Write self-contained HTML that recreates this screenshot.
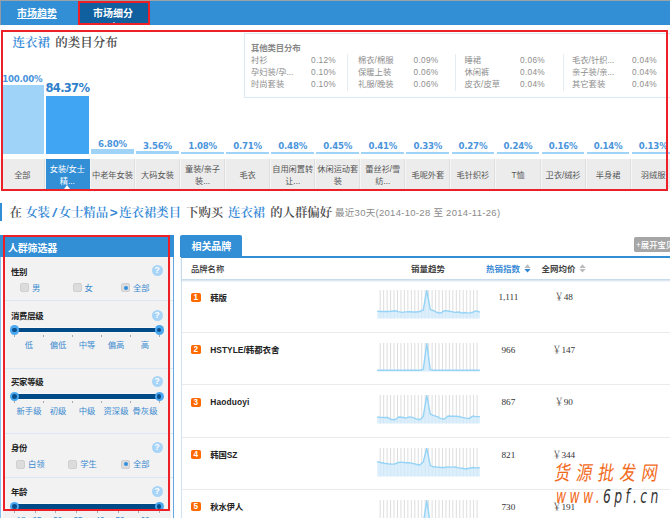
<!DOCTYPE html>
<html lang="zh-CN"><head><meta charset="utf-8"><title>市场细分</title>
<style>
*{box-sizing:border-box;margin:0;padding:0}
html,body{width:670px;height:518px;overflow:hidden;background:#fff}
body{position:relative;font-family:"Liberation Sans","Noto Sans CJK SC",sans-serif;font-size:8.3px;color:#555;line-height:1}
.a{position:absolute;white-space:nowrap}
.serif{font-family:"Liberation Serif","Noto Serif CJK SC",serif;font-weight:600}
.blue{color:#3388d6}
.b{font-weight:700}
.sy{display:inline-block;width:9.7px;text-align:center;font-size:13.5px;line-height:10px;font-style:italic;font-weight:700;font-family:"Liberation Sans",sans-serif}
.red{position:absolute;border:2px solid #ee2027;pointer-events:none}
.cell{position:absolute;top:158.8px;height:30.7px;width:45.06px;background:#ececec;border-right:0.8px solid #dfdfdf;border-left:0.8px solid #f6f6f6;text-align:center;color:#555;font-size:8.2px;line-height:12px;display:flex;align-items:center;justify-content:center;padding-top:3.4px}
.cell.on{background:#328fd6;color:#fff;border-right-color:#328fd6}
.bar{position:absolute;background:#9fd3f8}
.pl{position:absolute;text-align:center;width:45.06px;font-weight:700;color:#4a94dc;font-size:8.6px;font-family:"DejaVu Sans","Liberation Sans",sans-serif;letter-spacing:-0.2px}
.it{position:absolute;color:#8e8e8e;font-size:8.3px;line-height:12.2px;white-space:nowrap}
.sec{position:absolute;left:5px;width:168px;border-top:1px solid #dbe8f3}
.st{position:absolute;left:11px;font-weight:700;color:#222;font-size:8.4px;letter-spacing:-0.3px}
.q{position:absolute;left:151.5px;width:11px;height:11px;border-radius:50%;background:#a8d4f7;color:#fff;font-weight:700;font-size:8.5px;text-align:center;line-height:11px}
.cb{position:absolute;width:9px;height:9px;border-radius:2px;background:#dcdcdc;border:1px solid #cfcfcf}
.cb.on::after{content:"";position:absolute;left:1.5px;top:1.5px;width:4px;height:4px;border-radius:50%;background:#2f8fe0}
.ol{position:absolute;color:#3a8ad0;font-size:8.3px}
.trk{position:absolute;left:14.5px;width:145px;height:4.7px;background:#004a87;box-shadow:0 0 0 0.6px rgba(255,255,255,.8)}
.hd{position:absolute;width:9.4px;height:9.4px;border-radius:50%;background:#4aa8f0}
.hd::after{content:"";position:absolute;left:2.4px;top:2.4px;width:4.6px;height:4.6px;border-radius:50%;background:#0a4f8c}
.tk{position:absolute;width:1px;height:2.5px;background:#aaa}
.sl{position:absolute;color:#3a8ad0;font-size:8.3px;text-align:center;width:36px}
.row{position:absolute;left:181px;width:489px;border-top:1px solid #e6eef5}
.bd{position:absolute;left:191px;width:9.7px;height:9px;border-radius:1.8px;background:#ff6a00;color:#fff;font-weight:700;font-size:8.2px;line-height:9px;text-align:center;font-family:"Liberation Sans",sans-serif}
.nm{position:absolute;left:210.3px;font-weight:700;color:#222;font-size:8.4px;letter-spacing:-0.25px}
.num{position:absolute;color:#333;font-size:9.2px;text-align:center;width:60px;font-family:"Liberation Serif","Noto Serif CJK SC",serif}
</style></head><body>

<div class="a" style="left:0;top:0;width:670px;height:1px;background:#9aa3aa"></div>
<div class="a" style="left:0;top:1px;width:670px;height:24px;background:#328fd6"></div>
<div class="a" style="left:0;top:1px;width:1px;height:24px;background:#8f9aa3"></div>
<div class="a b" style="left:17px;top:8px;font-size:10px;color:#fff;text-decoration:underline;line-height:12px">市场趋势</div>
<div class="a" style="left:78px;top:1px;width:72px;height:24px;background:#10609f"></div>
<div class="a b" style="left:93px;top:8px;font-size:10px;color:#fff;line-height:12px">市场细分</div>
<div class="a" style="left:111px;top:22px;width:0;height:0;border-left:3px solid transparent;border-right:3px solid transparent;border-bottom:3px solid #fff"></div>
<div class="red" style="left:78px;top:1px;width:72px;height:24px"></div>
<div class="a" style="left:244px;top:32.5px;width:426px;height:1px;background:#cfe3f4"></div>
<div class="a serif" style="left:12.5px;top:35px;font-size:12.5px;line-height:16px;color:#4a4a4a;word-spacing:2px"><span class="blue">连衣裙</span> 的类目分布</div>
<div class="a" style="left:243.5px;top:33px;width:430px;height:64.5px;border:1px solid #dbe9f6;background:#fff"></div>
<div class="a b" style="left:251px;top:43px;font-size:8.4px;color:#888;line-height:10px;letter-spacing:-0.1px">其他类目分布</div>
<div class="it" style="left:251px;top:53.7px">衬衫</div>
<div class="it" style="left:311px;top:53.7px;letter-spacing:0.3px">0.12%</div>
<div class="it" style="left:251px;top:65.9px">孕妇装/孕...</div>
<div class="it" style="left:311px;top:65.9px;letter-spacing:0.3px">0.10%</div>
<div class="it" style="left:251px;top:78.1px">时尚套装</div>
<div class="it" style="left:311px;top:78.1px;letter-spacing:0.3px">0.10%</div>
<div class="it" style="left:358px;top:53.7px">棉衣/棉服</div>
<div class="it" style="left:413.5px;top:53.7px;letter-spacing:0.3px">0.09%</div>
<div class="it" style="left:358px;top:65.9px">保暖上装</div>
<div class="it" style="left:413.5px;top:65.9px;letter-spacing:0.3px">0.06%</div>
<div class="it" style="left:358px;top:78.1px">礼服/晚装</div>
<div class="it" style="left:413.5px;top:78.1px;letter-spacing:0.3px">0.06%</div>
<div class="it" style="left:464.5px;top:53.7px">睡裙</div>
<div class="it" style="left:520px;top:53.7px;letter-spacing:0.3px">0.06%</div>
<div class="it" style="left:464.5px;top:65.9px">休闲裤</div>
<div class="it" style="left:520px;top:65.9px;letter-spacing:0.3px">0.04%</div>
<div class="it" style="left:464.5px;top:78.1px">皮衣/皮草</div>
<div class="it" style="left:520px;top:78.1px;letter-spacing:0.3px">0.04%</div>
<div class="it" style="left:572px;top:53.7px">毛衣/针织...</div>
<div class="it" style="left:632px;top:53.7px;letter-spacing:0.3px">0.04%</div>
<div class="it" style="left:572px;top:65.9px">亲子装/亲...</div>
<div class="it" style="left:632px;top:65.9px;letter-spacing:0.3px">0.04%</div>
<div class="it" style="left:572px;top:78.1px">其它套装</div>
<div class="it" style="left:632px;top:78.1px;letter-spacing:0.3px">0.04%</div>
<div class="a" style="left:347px;top:54px;width:1px;height:37px;background:#e3edf6"></div>
<div class="a" style="left:454.5px;top:54px;width:1px;height:37px;background:#e3edf6"></div>
<div class="a" style="left:562.5px;top:54px;width:1px;height:37px;background:#e3edf6"></div>
<div class="bar" style="left:0.94px;top:84.6px;width:42.7px;height:69.2px;background:#9fd3f8"></div>
<div class="pl" style="left:-0.20px;top:74.2px;line-height:10px">100.00%</div>
<div class="cell" style="left:-0.20px"><span>全部</span></div>
<div class="bar" style="left:46.00px;top:95.8px;width:42.7px;height:58.0px;background:#40a6f4"></div>
<div class="pl" style="left:44.86px;top:80.6px;font-size:11.5px;color:#2f7fca;line-height:14px;letter-spacing:-0.7px">84.37%</div>
<div class="cell on" style="left:44.86px"><span>女装/女士<br>精...</span></div>
<div class="bar" style="left:91.06px;top:149.1px;width:42.7px;height:4.7px;background:#9fd3f8"></div>
<div class="pl" style="left:89.92px;top:138.8px;line-height:10px">6.80%</div>
<div class="cell" style="left:89.92px"><span>中老年女装</span></div>
<div class="bar" style="left:136.12px;top:151.3px;width:42.7px;height:2.5px;background:#9fd3f8"></div>
<div class="pl" style="left:134.98px;top:141.0px;line-height:10px">3.56%</div>
<div class="cell" style="left:134.98px"><span>大码女装</span></div>
<div class="bar" style="left:181.18px;top:151.6px;width:42.7px;height:2.2px;background:#9fd3f8"></div>
<div class="pl" style="left:180.04px;top:141.3px;line-height:10px">1.08%</div>
<div class="cell" style="left:180.04px"><span>童装/亲子<br>装...</span></div>
<div class="bar" style="left:226.24px;top:151.6px;width:42.7px;height:2.2px;background:#9fd3f8"></div>
<div class="pl" style="left:225.10px;top:141.3px;line-height:10px">0.71%</div>
<div class="cell" style="left:225.10px"><span>毛衣</span></div>
<div class="bar" style="left:271.30px;top:151.6px;width:42.7px;height:2.2px;background:#9fd3f8"></div>
<div class="pl" style="left:270.16px;top:141.3px;line-height:10px">0.48%</div>
<div class="cell" style="left:270.16px"><span>自用闲置转<br>让...</span></div>
<div class="bar" style="left:316.36px;top:151.6px;width:42.7px;height:2.2px;background:#9fd3f8"></div>
<div class="pl" style="left:315.22px;top:141.3px;line-height:10px">0.45%</div>
<div class="cell" style="left:315.22px"><span>休闲运动套<br>装</span></div>
<div class="bar" style="left:361.42px;top:151.6px;width:42.7px;height:2.2px;background:#9fd3f8"></div>
<div class="pl" style="left:360.28px;top:141.3px;line-height:10px">0.41%</div>
<div class="cell" style="left:360.28px"><span>蕾丝衫/雪<br>纺...</span></div>
<div class="bar" style="left:406.48px;top:151.6px;width:42.7px;height:2.2px;background:#9fd3f8"></div>
<div class="pl" style="left:405.34px;top:141.3px;line-height:10px">0.33%</div>
<div class="cell" style="left:405.34px"><span>毛呢外套</span></div>
<div class="bar" style="left:451.54px;top:151.6px;width:42.7px;height:2.2px;background:#9fd3f8"></div>
<div class="pl" style="left:450.40px;top:141.3px;line-height:10px">0.27%</div>
<div class="cell" style="left:450.40px"><span>毛针织衫</span></div>
<div class="bar" style="left:496.60px;top:151.6px;width:42.7px;height:2.2px;background:#9fd3f8"></div>
<div class="pl" style="left:495.46px;top:141.3px;line-height:10px">0.24%</div>
<div class="cell" style="left:495.46px"><span>T恤</span></div>
<div class="bar" style="left:541.66px;top:151.6px;width:42.7px;height:2.2px;background:#9fd3f8"></div>
<div class="pl" style="left:540.52px;top:141.3px;line-height:10px">0.16%</div>
<div class="cell" style="left:540.52px"><span>卫衣/绒衫</span></div>
<div class="bar" style="left:586.72px;top:151.6px;width:42.7px;height:2.2px;background:#9fd3f8"></div>
<div class="pl" style="left:585.58px;top:141.3px;line-height:10px">0.14%</div>
<div class="cell" style="left:585.58px"><span>半身裙</span></div>
<div class="bar" style="left:631.78px;top:151.6px;width:42.7px;height:2.2px;background:#9fd3f8"></div>
<div class="pl" style="left:630.64px;top:141.3px;line-height:10px">0.13%</div>
<div class="cell" style="left:630.64px"><span>羽绒服</span></div>
<div class="a" style="left:63.6px;top:185.3px;width:0;height:0;border-left:3.8px solid transparent;border-right:3.8px solid transparent;border-bottom:4px solid #fff"></div>
<div class="red" style="left:1px;top:30px;width:666.5px;height:161px"></div>
<div class="a" style="left:0;top:203px;width:2px;height:18px;background:#328fd6"></div>
<div class="a serif" style="left:9.5px;top:204.5px;font-size:12.4px;line-height:16px;color:#4a4a4a;word-spacing:1.8px"><span style="margin-right:-1.6px">在</span> <span class="blue">女装<span class="sy" style="width:8.6px">/</span>女士精品<span class="sy" style="width:11px;font-style:normal;font-size:13.5px">&gt;</span>连衣裙类目</span> 下购买 <span class="blue">连衣裙</span> 的人群偏好</div>
<div class="a" style="left:335px;top:207.2px;font-size:9.5px;color:#8a8a8a;line-height:11px;letter-spacing:0.29px">最近30天(2014-10-28 至 2014-11-26)</div>
<div class="a" style="left:0;top:235px;width:174.2px;height:290px;background:#fbfbfb;border-left:1px solid #8cc0ec;border-right:1.2px solid #62a6e2"></div>
<div class="a" style="left:3px;top:257px;width:167.5px;height:270px;background:#f2f2f2"></div>
<div class="a" style="left:0;top:235px;width:174px;height:22px;background:#328fd6"></div>
<div class="a b" style="left:8px;top:242.6px;font-size:10px;color:#fff;line-height:12px;letter-spacing:-0.2px">人群筛选器</div>
<div class="st" style="top:266.5px;line-height:10px">性别</div>
<div class="q" style="top:265.0px">?</div>
<div class="cb" style="left:20px;top:283.0px"></div>
<div class="ol" style="left:32px;top:282.9px;line-height:10px">男</div>
<div class="cb" style="left:72.5px;top:283.0px"></div>
<div class="ol" style="left:84.5px;top:282.9px;line-height:10px">女</div>
<div class="cb on" style="left:121px;top:283.0px"></div>
<div class="ol" style="left:133px;top:282.9px;line-height:10px">全部</div>
<div class="a" style="left:5px;top:300px;width:168px;height:1px;background:#dbe8f3"></div>
<div class="st" style="top:311px;line-height:10px">消费层级</div>
<div class="q" style="top:309.5px">?</div>
<div class="trk" style="top:327.65px"></div>
<div class="hd" style="left:9.6px;top:325.3px"></div>
<div class="hd" style="left:154.5px;top:325.3px"></div>
<div class="tk" style="left:14.0px;top:334.5px"></div>
<div class="tk" style="left:43.0px;top:334.5px"></div>
<div class="tk" style="left:72.0px;top:334.5px"></div>
<div class="tk" style="left:101.0px;top:334.5px"></div>
<div class="tk" style="left:130.0px;top:334.5px"></div>
<div class="tk" style="left:159.0px;top:334.5px"></div>
<div class="sl" style="left:11.0px;top:339.5px;line-height:10px">低</div>
<div class="sl" style="left:40.0px;top:339.5px;line-height:10px">偏低</div>
<div class="sl" style="left:69.0px;top:339.5px;line-height:10px">中等</div>
<div class="sl" style="left:98.0px;top:339.5px;line-height:10px">偏高</div>
<div class="sl" style="left:127.0px;top:339.5px;line-height:10px">高</div>
<div class="a" style="left:5px;top:367.5px;width:168px;height:1px;background:#dbe8f3"></div>
<div class="st" style="top:377px;line-height:10px">买家等级</div>
<div class="q" style="top:375.5px">?</div>
<div class="trk" style="top:394.04999999999995px"></div>
<div class="hd" style="left:9.6px;top:391.7px"></div>
<div class="hd" style="left:154.5px;top:391.7px"></div>
<div class="tk" style="left:14.0px;top:400.9px"></div>
<div class="tk" style="left:43.0px;top:400.9px"></div>
<div class="tk" style="left:72.0px;top:400.9px"></div>
<div class="tk" style="left:101.0px;top:400.9px"></div>
<div class="tk" style="left:130.0px;top:400.9px"></div>
<div class="tk" style="left:159.0px;top:400.9px"></div>
<div class="sl" style="left:11.0px;top:405.9px;line-height:10px">新手级</div>
<div class="sl" style="left:40.0px;top:405.9px;line-height:10px">初级</div>
<div class="sl" style="left:69.0px;top:405.9px;line-height:10px">中级</div>
<div class="sl" style="left:98.0px;top:405.9px;line-height:10px">资深级</div>
<div class="sl" style="left:127.0px;top:405.9px;line-height:10px">骨灰级</div>
<div class="a" style="left:5px;top:432.8px;width:168px;height:1px;background:#dbe8f3"></div>
<div class="st" style="top:443px;line-height:10px">身份</div>
<div class="q" style="top:441.5px">?</div>
<div class="cb" style="left:16px;top:459.5px"></div>
<div class="ol" style="left:28px;top:459.4px;line-height:10px">白领</div>
<div class="cb" style="left:68.2px;top:459.5px"></div>
<div class="ol" style="left:80.2px;top:459.4px;line-height:10px">学生</div>
<div class="cb on" style="left:121px;top:459.5px"></div>
<div class="ol" style="left:133px;top:459.4px;line-height:10px">全部</div>
<div class="a" style="left:5px;top:477.3px;width:168px;height:1px;background:#dbe8f3"></div>
<div class="st" style="top:487px;line-height:10px">年龄</div>
<div class="q" style="top:485.5px">?</div>
<div class="trk" style="top:503.95px"></div>
<div class="hd" style="left:9.6px;top:501.6px"></div>
<div class="hd" style="left:154.5px;top:501.6px"></div>
<div class="tk" style="left:14.0px;top:510.8px"></div>
<div class="tk" style="left:34.7px;top:510.8px"></div>
<div class="tk" style="left:55.4px;top:510.8px"></div>
<div class="tk" style="left:76.1px;top:510.8px"></div>
<div class="tk" style="left:96.8px;top:510.8px"></div>
<div class="tk" style="left:117.6px;top:510.8px"></div>
<div class="tk" style="left:138.3px;top:510.8px"></div>
<div class="tk" style="left:159.0px;top:510.8px"></div>
<div class="sl" style="left:3px;top:515.3px;line-height:10px">18</div>
<div class="sl" style="left:19px;top:515.3px;line-height:10px">25</div>
<div class="sl" style="left:39.5px;top:515.3px;line-height:10px">30</div>
<div class="sl" style="left:60px;top:515.3px;line-height:10px">35</div>
<div class="sl" style="left:82px;top:515.3px;line-height:10px">40</div>
<div class="sl" style="left:102px;top:515.3px;line-height:10px">50</div>
<div class="sl" style="left:127px;top:515.3px;line-height:10px">60</div>
<div class="red" style="left:3px;top:235px;width:167px;height:276px"></div>
<div class="a" style="left:180.5px;top:257px;width:500px;height:270px;border-left:1px solid #cfe3f4"></div>
<div class="a" style="left:180px;top:235px;width:61.6px;height:22px;background:#328fd6;border-radius:2px 2px 0 0"></div>
<div class="a b" style="left:191.5px;top:240.5px;font-size:10px;color:#fff;line-height:12px;letter-spacing:-0.1px">相关品牌</div>
<div class="a" style="left:180.5px;top:256.3px;width:490px;height:1.4px;background:#328fd6"></div>
<div class="a" style="left:180.5px;top:257.7px;width:490px;height:22.5px;background:#fff;border-bottom:1px solid #c9dceb;border-left:1px solid #c9dceb;box-shadow:0 1px 1.5px rgba(120,160,200,.35)"></div>
<div class="a" style="left:191px;top:263.8px;font-size:8.3px;color:#333;line-height:10px;font-weight:500">品牌名称</div>
<div class="a b" style="left:411px;top:264px;font-size:8.5px;color:#444;line-height:10px;letter-spacing:0">销量趋势</div>
<div class="a b" style="left:486px;top:264px;font-size:8.5px;color:#3a8ad6;line-height:10px">热销指数</div>
<div class="a b" style="left:541.5px;top:264px;font-size:8.5px;color:#444;line-height:10px">全网均价</div>
<svg class="a" style="left:523.55px;top:264px" width="7" height="10" viewBox="0 0 7 10"><path d="M3.5 0.3 L6.65 3.9 L0.35 3.9Z" fill="#bbb"/><path d="M0.35 5.1 L6.65 5.1 L3.5 8.4Z" fill="#2f86d3"/></svg>
<svg class="a" style="left:578.65px;top:264px" width="7" height="10" viewBox="0 0 7 10"><path d="M3.5 0.3 L6.65 3.9 L0.35 3.9Z" fill="#bbb"/><path d="M0.35 5.1 L6.65 5.1 L3.5 8.4Z" fill="#bbb"/></svg>
<div class="a" style="left:634px;top:237.2px;width:40px;height:14.5px;background:#a6a6a6;border-radius:1.8px"></div>
<div class="a" style="left:636px;top:239.8px;font-size:8.3px;color:#fff;line-height:10px;font-weight:500">+展开宝贝</div>
<div class="bd" style="top:292.8px">1</div>
<div class="nm" style="top:292.5px;line-height:10px;letter-spacing:-0.25px">韩版</div>
<div class="num" style="left:478.4px;top:292.3px;line-height:10px">1,111</div>
<div class="num" style="left:533.7px;top:292.3px;line-height:10px">￥48</div>
<svg class="a" style="left:376px;top:290.4px" width="106" height="30" viewBox="0 0 106 30"><path d="M4.20 0V28.4M7.66 0V28.4M11.12 0V28.4M14.58 0V28.4M18.04 0V28.4M21.50 0V28.4M24.96 0V28.4M28.42 0V28.4M31.88 0V28.4M35.34 0V28.4M38.80 0V28.4M42.26 0V28.4M45.72 0V28.4M49.18 0V28.4M52.64 0V28.4M56.10 0V28.4M59.56 0V28.4M63.02 0V28.4M66.48 0V28.4M69.94 0V28.4M73.40 0V28.4M76.86 0V28.4M80.32 0V28.4M83.78 0V28.4M87.24 0V28.4M90.70 0V28.4M94.16 0V28.4M97.62 0V28.4M101.08 0V28.4" stroke="#d4d4d4" stroke-width="0.8" fill="none"/><path d="M1.20 21.14 L4.74 21.49 L8.28 21.49 L11.82 21.49 L15.36 21.31 L18.90 20.78 L22.44 21.67 L25.98 22.39 L29.52 21.85 L33.06 21.67 L36.60 22.03 L40.14 22.03 L43.68 21.49 L47.22 20.06 L50.76 0.36 L54.30 19.70 L57.84 20.78 L61.38 22.57 L64.92 22.93 L68.46 20.60 L72.00 20.96 L75.54 21.67 L79.08 22.39 L82.62 22.03 L86.16 22.93 L89.70 22.57 L93.24 23.11 L96.78 22.21 L100.32 20.78 L103.86 22.21 L103.86 28.4 L1.20 28.4Z" fill="#cfeafb" fill-opacity="0.75"/><path d="M1.20 21.14 L4.74 21.49 L8.28 21.49 L11.82 21.49 L15.36 21.31 L18.90 20.78 L22.44 21.67 L25.98 22.39 L29.52 21.85 L33.06 21.67 L36.60 22.03 L40.14 22.03 L43.68 21.49 L47.22 20.06 L50.76 0.36 L54.30 19.70 L57.84 20.78 L61.38 22.57 L64.92 22.93 L68.46 20.60 L72.00 20.96 L75.54 21.67 L79.08 22.39 L82.62 22.03 L86.16 22.93 L89.70 22.57 L93.24 23.11 L96.78 22.21 L100.32 20.78 L103.86 22.21" stroke="#96d4f7" stroke-width="1.4" fill="none" stroke-linejoin="round"/></svg>
<div class="a" style="left:181.5px;top:332.0px;width:490px;height:1px;background:#ebebeb"></div>
<div class="bd" style="top:345.2px">2</div>
<div class="nm" style="top:344.9px;line-height:10px;letter-spacing:0.02px">HSTYLE/韩都衣舍</div>
<div class="num" style="left:478.4px;top:344.7px;line-height:10px">966</div>
<div class="num" style="left:533.7px;top:344.7px;line-height:10px">￥147</div>
<svg class="a" style="left:376px;top:342.9px" width="106" height="30" viewBox="0 0 106 30"><path d="M4.20 0V28.4M7.66 0V28.4M11.12 0V28.4M14.58 0V28.4M18.04 0V28.4M21.50 0V28.4M24.96 0V28.4M28.42 0V28.4M31.88 0V28.4M35.34 0V28.4M38.80 0V28.4M42.26 0V28.4M45.72 0V28.4M49.18 0V28.4M52.64 0V28.4M56.10 0V28.4M59.56 0V28.4M63.02 0V28.4M66.48 0V28.4M69.94 0V28.4M73.40 0V28.4M76.86 0V28.4M80.32 0V28.4M83.78 0V28.4M87.24 0V28.4M90.70 0V28.4M94.16 0V28.4M97.62 0V28.4M101.08 0V28.4" stroke="#d4d4d4" stroke-width="0.8" fill="none"/><path d="M1.20 27.30 L4.74 27.30 L8.28 27.30 L11.82 27.30 L15.36 27.30 L18.90 27.30 L22.44 27.30 L25.98 27.30 L29.52 27.30 L33.06 27.30 L36.60 27.30 L40.14 27.30 L43.68 27.30 L47.22 26.50 L50.76 0.50 L54.30 26.80 L57.84 27.30 L61.38 27.30 L64.92 27.30 L68.46 27.30 L72.00 27.30 L75.54 27.30 L79.08 27.30 L82.62 27.30 L86.16 27.30 L89.70 27.30 L93.24 27.30 L96.78 27.30 L100.32 27.30 L103.86 27.30 L103.86 28.4 L1.20 28.4Z" fill="#cfeafb" fill-opacity="0.75"/><path d="M1.20 27.30 L4.74 27.30 L8.28 27.30 L11.82 27.30 L15.36 27.30 L18.90 27.30 L22.44 27.30 L25.98 27.30 L29.52 27.30 L33.06 27.30 L36.60 27.30 L40.14 27.30 L43.68 27.30 L47.22 26.50 L50.76 0.50 L54.30 26.80 L57.84 27.30 L61.38 27.30 L64.92 27.30 L68.46 27.30 L72.00 27.30 L75.54 27.30 L79.08 27.30 L82.62 27.30 L86.16 27.30 L89.70 27.30 L93.24 27.30 L96.78 27.30 L100.32 27.30 L103.86 27.30" stroke="#96d4f7" stroke-width="1.4" fill="none" stroke-linejoin="round"/></svg>
<div class="a" style="left:181.5px;top:384.3px;width:490px;height:1px;background:#ebebeb"></div>
<div class="bd" style="top:397.6px">3</div>
<div class="nm" style="top:397.3px;line-height:10px;letter-spacing:0.12px">Haoduoyi</div>
<div class="num" style="left:478.4px;top:397.1px;line-height:10px">867</div>
<div class="num" style="left:533.7px;top:397.1px;line-height:10px">￥90</div>
<svg class="a" style="left:376px;top:395.4px" width="106" height="30" viewBox="0 0 106 30"><path d="M4.20 0V28.4M7.66 0V28.4M11.12 0V28.4M14.58 0V28.4M18.04 0V28.4M21.50 0V28.4M24.96 0V28.4M28.42 0V28.4M31.88 0V28.4M35.34 0V28.4M38.80 0V28.4M42.26 0V28.4M45.72 0V28.4M49.18 0V28.4M52.64 0V28.4M56.10 0V28.4M59.56 0V28.4M63.02 0V28.4M66.48 0V28.4M69.94 0V28.4M73.40 0V28.4M76.86 0V28.4M80.32 0V28.4M83.78 0V28.4M87.24 0V28.4M90.70 0V28.4M94.16 0V28.4M97.62 0V28.4M101.08 0V28.4" stroke="#d4d4d4" stroke-width="0.8" fill="none"/><path d="M1.20 22.03 L4.74 22.39 L8.28 22.57 L11.82 22.57 L15.36 24.54 L18.90 24.72 L22.44 22.03 L25.98 22.21 L29.52 23.11 L33.06 21.85 L36.60 22.39 L40.14 23.82 L43.68 24.72 L47.22 21.49 L50.76 0.54 L54.30 19.17 L57.84 20.60 L61.38 21.67 L64.92 23.64 L68.46 24.00 L72.00 20.96 L75.54 21.31 L79.08 21.31 L82.62 21.49 L86.16 22.39 L89.70 23.11 L93.24 23.46 L96.78 21.14 L100.32 21.67 L103.86 21.67 L103.86 28.4 L1.20 28.4Z" fill="#cfeafb" fill-opacity="0.75"/><path d="M1.20 22.03 L4.74 22.39 L8.28 22.57 L11.82 22.57 L15.36 24.54 L18.90 24.72 L22.44 22.03 L25.98 22.21 L29.52 23.11 L33.06 21.85 L36.60 22.39 L40.14 23.82 L43.68 24.72 L47.22 21.49 L50.76 0.54 L54.30 19.17 L57.84 20.60 L61.38 21.67 L64.92 23.64 L68.46 24.00 L72.00 20.96 L75.54 21.31 L79.08 21.31 L82.62 21.49 L86.16 22.39 L89.70 23.11 L93.24 23.46 L96.78 21.14 L100.32 21.67 L103.86 21.67" stroke="#96d4f7" stroke-width="1.4" fill="none" stroke-linejoin="round"/></svg>
<div class="a" style="left:181.5px;top:436.7px;width:490px;height:1px;background:#ebebeb"></div>
<div class="bd" style="top:450.0px">4</div>
<div class="nm" style="top:449.7px;line-height:10px;letter-spacing:-0.1px">韩国SZ</div>
<div class="num" style="left:478.4px;top:449.5px;line-height:10px">821</div>
<div class="num" style="left:533.7px;top:449.5px;line-height:10px">￥344</div>
<svg class="a" style="left:376px;top:447.9px" width="106" height="30" viewBox="0 0 106 30"><path d="M4.20 0V28.4M7.66 0V28.4M11.12 0V28.4M14.58 0V28.4M18.04 0V28.4M21.50 0V28.4M24.96 0V28.4M28.42 0V28.4M31.88 0V28.4M35.34 0V28.4M38.80 0V28.4M42.26 0V28.4M45.72 0V28.4M49.18 0V28.4M52.64 0V28.4M56.10 0V28.4M59.56 0V28.4M63.02 0V28.4M66.48 0V28.4M69.94 0V28.4M73.40 0V28.4M76.86 0V28.4M80.32 0V28.4M83.78 0V28.4M87.24 0V28.4M90.70 0V28.4M94.16 0V28.4M97.62 0V28.4M101.08 0V28.4" stroke="#d4d4d4" stroke-width="0.8" fill="none"/><path d="M1.20 13.61 L4.74 14.51 L8.28 15.22 L11.82 15.76 L15.36 16.12 L18.90 15.94 L22.44 14.51 L25.98 14.15 L29.52 14.69 L33.06 14.69 L36.60 15.40 L40.14 16.30 L43.68 17.02 L47.22 13.97 L50.76 0.18 L54.30 17.55 L57.84 18.81 L61.38 19.17 L64.92 19.52 L68.46 19.52 L72.00 18.99 L75.54 19.17 L79.08 18.99 L82.62 19.88 L86.16 20.24 L89.70 20.96 L93.24 20.24 L96.78 19.52 L100.32 19.88 L103.86 19.70 L103.86 28.4 L1.20 28.4Z" fill="#cfeafb" fill-opacity="0.75"/><path d="M1.20 13.61 L4.74 14.51 L8.28 15.22 L11.82 15.76 L15.36 16.12 L18.90 15.94 L22.44 14.51 L25.98 14.15 L29.52 14.69 L33.06 14.69 L36.60 15.40 L40.14 16.30 L43.68 17.02 L47.22 13.97 L50.76 0.18 L54.30 17.55 L57.84 18.81 L61.38 19.17 L64.92 19.52 L68.46 19.52 L72.00 18.99 L75.54 19.17 L79.08 18.99 L82.62 19.88 L86.16 20.24 L89.70 20.96 L93.24 20.24 L96.78 19.52 L100.32 19.88 L103.86 19.70" stroke="#96d4f7" stroke-width="1.4" fill="none" stroke-linejoin="round"/></svg>
<div class="a" style="left:181.5px;top:489.0px;width:490px;height:1px;background:#ebebeb"></div>
<div class="bd" style="top:502.4px">5</div>
<div class="nm" style="top:502.1px;line-height:10px;letter-spacing:-0.25px">秋水伊人</div>
<div class="num" style="left:478.4px;top:501.9px;line-height:10px">730</div>
<div class="num" style="left:533.7px;top:501.9px;line-height:10px">￥191</div>
<svg class="a" style="left:376px;top:500.4px" width="106" height="30" viewBox="0 0 106 30"><path d="M4.20 0V28.4M7.66 0V28.4M11.12 0V28.4M14.58 0V28.4M18.04 0V28.4M21.50 0V28.4M24.96 0V28.4M28.42 0V28.4M31.88 0V28.4M35.34 0V28.4M38.80 0V28.4M42.26 0V28.4M45.72 0V28.4M49.18 0V28.4M52.64 0V28.4M56.10 0V28.4M59.56 0V28.4M63.02 0V28.4M66.48 0V28.4M69.94 0V28.4M73.40 0V28.4M76.86 0V28.4M80.32 0V28.4M83.78 0V28.4M87.24 0V28.4M90.70 0V28.4M94.16 0V28.4M97.62 0V28.4M101.08 0V28.4" stroke="#d4d4d4" stroke-width="0.8" fill="none"/><path d="M1.20 24.00 L4.74 24.00 L8.28 24.00 L11.82 24.00 L15.36 24.00 L18.90 24.00 L22.44 24.00 L25.98 24.00 L29.52 24.00 L33.06 24.00 L36.60 24.00 L40.14 24.00 L43.68 24.00 L47.22 24.00 L50.76 0.50 L54.30 24.00 L57.84 24.00 L61.38 24.00 L64.92 24.00 L68.46 24.00 L72.00 24.00 L75.54 24.00 L79.08 24.00 L82.62 24.00 L86.16 24.00 L89.70 24.00 L93.24 24.00 L96.78 24.00 L100.32 24.00 L103.86 24.00 L103.86 28.4 L1.20 28.4Z" fill="#cfeafb" fill-opacity="0.75"/><path d="M1.20 24.00 L4.74 24.00 L8.28 24.00 L11.82 24.00 L15.36 24.00 L18.90 24.00 L22.44 24.00 L25.98 24.00 L29.52 24.00 L33.06 24.00 L36.60 24.00 L40.14 24.00 L43.68 24.00 L47.22 24.00 L50.76 0.50 L54.30 24.00 L57.84 24.00 L61.38 24.00 L64.92 24.00 L68.46 24.00 L72.00 24.00 L75.54 24.00 L79.08 24.00 L82.62 24.00 L86.16 24.00 L89.70 24.00 L93.24 24.00 L96.78 24.00 L100.32 24.00 L103.86 24.00" stroke="#96d4f7" stroke-width="1.4" fill="none" stroke-linejoin="round"/></svg>
<div class="a" style="left:555px;top:460px;font-family:'Noto Sans CJK SC',sans-serif;font-size:20px;line-height:24px;color:#f26a1b;font-weight:400;letter-spacing:7.2px;transform-origin:0 50%;transform:skewX(-9deg) scaleX(0.8)">货源批发网</div>
<div class="a" style="left:556px;top:485px;font-family:'DejaVu Sans','Liberation Sans',sans-serif;font-size:19px;line-height:22px;font-style:italic;letter-spacing:5.2px;color:#333;transform-origin:0 0;transform:scaleX(0.65)"><span style="color:#f26a1b">www.</span>6pf.cn</div>
</body></html>
